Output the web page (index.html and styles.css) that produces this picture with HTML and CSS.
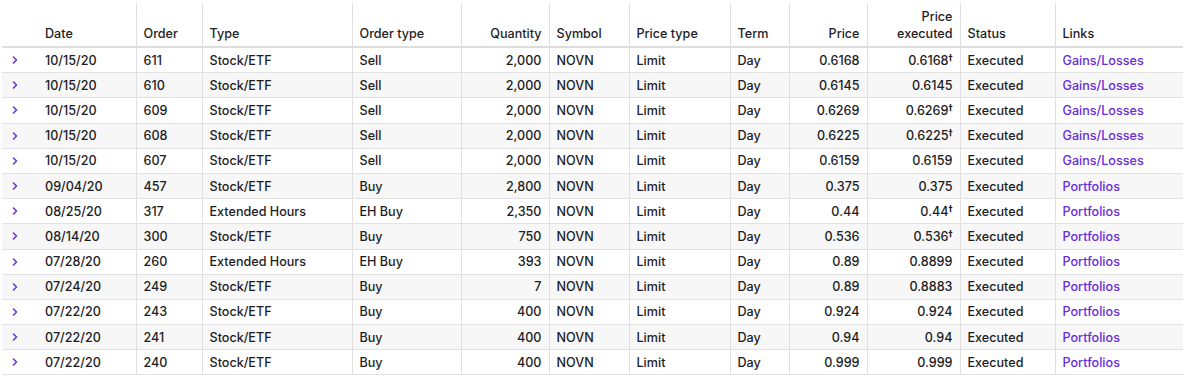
FILE: index.html
```html
<!DOCTYPE html>
<html lang="en">
<head>
<meta charset="utf-8">
<title>Orders</title>
<link rel="stylesheet" href="styles.css">
</head>
<body>
<table class="orders">
  <colgroup>
    <col class="c-arrow"><col class="c-date"><col class="c-order"><col class="c-type"><col class="c-otype"><col class="c-qty"><col class="c-sym"><col class="c-ptype"><col class="c-term"><col class="c-price"><col class="c-pexec"><col class="c-status"><col class="c-links">
  </colgroup>
  <thead>
    <tr>
      <th class="arrow"></th>
      <th>Date</th>
      <th class="bl">Order</th>
      <th class="bl">Type</th>
      <th class="bl">Order type</th>
      <th class="bl num">Quantity</th>
      <th class="bl">Symbol</th>
      <th class="bl">Price type</th>
      <th class="bl">Term</th>
      <th class="bl num">Price</th>
      <th class="bl num">Price<br>executed</th>
      <th class="bl">Status</th>
      <th class="bl">Links</th>
    </tr>
  </thead>
  <tbody>
    <tr><td class="arrow"><svg class="chev" width="6" height="8" viewBox="0 0 6 8"><polyline points="1.5,1 4.5,4 1.5,7"/></svg></td><td>10/15/20</td><td class="bl">611</td><td class="bl">Stock/ETF</td><td class="bl">Sell</td><td class="bl num">2,000</td><td class="bl">NOVN</td><td class="bl">Limit</td><td class="bl">Day</td><td class="bl num">0.6168</td><td class="bl num">0.6168<sup>†</sup></td><td class="bl">Executed</td><td class="bl"><a href="#">Gains/Losses</a></td></tr>
    <tr><td class="arrow"><svg class="chev" width="6" height="8" viewBox="0 0 6 8"><polyline points="1.5,1 4.5,4 1.5,7"/></svg></td><td>10/15/20</td><td class="bl">610</td><td class="bl">Stock/ETF</td><td class="bl">Sell</td><td class="bl num">2,000</td><td class="bl">NOVN</td><td class="bl">Limit</td><td class="bl">Day</td><td class="bl num">0.6145</td><td class="bl num">0.6145</td><td class="bl">Executed</td><td class="bl"><a href="#">Gains/Losses</a></td></tr>
    <tr><td class="arrow"><svg class="chev" width="6" height="8" viewBox="0 0 6 8"><polyline points="1.5,1 4.5,4 1.5,7"/></svg></td><td>10/15/20</td><td class="bl">609</td><td class="bl">Stock/ETF</td><td class="bl">Sell</td><td class="bl num">2,000</td><td class="bl">NOVN</td><td class="bl">Limit</td><td class="bl">Day</td><td class="bl num">0.6269</td><td class="bl num">0.6269<sup>†</sup></td><td class="bl">Executed</td><td class="bl"><a href="#">Gains/Losses</a></td></tr>
    <tr><td class="arrow"><svg class="chev" width="6" height="8" viewBox="0 0 6 8"><polyline points="1.5,1 4.5,4 1.5,7"/></svg></td><td>10/15/20</td><td class="bl">608</td><td class="bl">Stock/ETF</td><td class="bl">Sell</td><td class="bl num">2,000</td><td class="bl">NOVN</td><td class="bl">Limit</td><td class="bl">Day</td><td class="bl num">0.6225</td><td class="bl num">0.6225<sup>†</sup></td><td class="bl">Executed</td><td class="bl"><a href="#">Gains/Losses</a></td></tr>
    <tr><td class="arrow"><svg class="chev" width="6" height="8" viewBox="0 0 6 8"><polyline points="1.5,1 4.5,4 1.5,7"/></svg></td><td>10/15/20</td><td class="bl">607</td><td class="bl">Stock/ETF</td><td class="bl">Sell</td><td class="bl num">2,000</td><td class="bl">NOVN</td><td class="bl">Limit</td><td class="bl">Day</td><td class="bl num">0.6159</td><td class="bl num">0.6159</td><td class="bl">Executed</td><td class="bl"><a href="#">Gains/Losses</a></td></tr>
    <tr><td class="arrow"><svg class="chev" width="6" height="8" viewBox="0 0 6 8"><polyline points="1.5,1 4.5,4 1.5,7"/></svg></td><td>09/04/20</td><td class="bl">457</td><td class="bl">Stock/ETF</td><td class="bl">Buy</td><td class="bl num">2,800</td><td class="bl">NOVN</td><td class="bl">Limit</td><td class="bl">Day</td><td class="bl num">0.375</td><td class="bl num">0.375</td><td class="bl">Executed</td><td class="bl"><a href="#">Portfolios</a></td></tr>
    <tr><td class="arrow"><svg class="chev" width="6" height="8" viewBox="0 0 6 8"><polyline points="1.5,1 4.5,4 1.5,7"/></svg></td><td>08/25/20</td><td class="bl">317</td><td class="bl">Extended Hours</td><td class="bl">EH Buy</td><td class="bl num">2,350</td><td class="bl">NOVN</td><td class="bl">Limit</td><td class="bl">Day</td><td class="bl num">0.44</td><td class="bl num">0.44<sup>†</sup></td><td class="bl">Executed</td><td class="bl"><a href="#">Portfolios</a></td></tr>
    <tr><td class="arrow"><svg class="chev" width="6" height="8" viewBox="0 0 6 8"><polyline points="1.5,1 4.5,4 1.5,7"/></svg></td><td>08/14/20</td><td class="bl">300</td><td class="bl">Stock/ETF</td><td class="bl">Buy</td><td class="bl num">750</td><td class="bl">NOVN</td><td class="bl">Limit</td><td class="bl">Day</td><td class="bl num">0.536</td><td class="bl num">0.536<sup>†</sup></td><td class="bl">Executed</td><td class="bl"><a href="#">Portfolios</a></td></tr>
    <tr><td class="arrow"><svg class="chev" width="6" height="8" viewBox="0 0 6 8"><polyline points="1.5,1 4.5,4 1.5,7"/></svg></td><td>07/28/20</td><td class="bl">260</td><td class="bl">Extended Hours</td><td class="bl">EH Buy</td><td class="bl num">393</td><td class="bl">NOVN</td><td class="bl">Limit</td><td class="bl">Day</td><td class="bl num">0.89</td><td class="bl num">0.8899</td><td class="bl">Executed</td><td class="bl"><a href="#">Portfolios</a></td></tr>
    <tr><td class="arrow"><svg class="chev" width="6" height="8" viewBox="0 0 6 8"><polyline points="1.5,1 4.5,4 1.5,7"/></svg></td><td>07/24/20</td><td class="bl">249</td><td class="bl">Stock/ETF</td><td class="bl">Buy</td><td class="bl num">7</td><td class="bl">NOVN</td><td class="bl">Limit</td><td class="bl">Day</td><td class="bl num">0.89</td><td class="bl num">0.8883</td><td class="bl">Executed</td><td class="bl"><a href="#">Portfolios</a></td></tr>
    <tr><td class="arrow"><svg class="chev" width="6" height="8" viewBox="0 0 6 8"><polyline points="1.5,1 4.5,4 1.5,7"/></svg></td><td>07/22/20</td><td class="bl">243</td><td class="bl">Stock/ETF</td><td class="bl">Buy</td><td class="bl num">400</td><td class="bl">NOVN</td><td class="bl">Limit</td><td class="bl">Day</td><td class="bl num">0.924</td><td class="bl num">0.924</td><td class="bl">Executed</td><td class="bl"><a href="#">Portfolios</a></td></tr>
    <tr><td class="arrow"><svg class="chev" width="6" height="8" viewBox="0 0 6 8"><polyline points="1.5,1 4.5,4 1.5,7"/></svg></td><td>07/22/20</td><td class="bl">241</td><td class="bl">Stock/ETF</td><td class="bl">Buy</td><td class="bl num">400</td><td class="bl">NOVN</td><td class="bl">Limit</td><td class="bl">Day</td><td class="bl num">0.94</td><td class="bl num">0.94</td><td class="bl">Executed</td><td class="bl"><a href="#">Portfolios</a></td></tr>
    <tr><td class="arrow"><svg class="chev" width="6" height="8" viewBox="0 0 6 8"><polyline points="1.5,1 4.5,4 1.5,7"/></svg></td><td>07/22/20</td><td class="bl">240</td><td class="bl">Stock/ETF</td><td class="bl">Buy</td><td class="bl num">400</td><td class="bl">NOVN</td><td class="bl">Limit</td><td class="bl">Day</td><td class="bl num">0.999</td><td class="bl num">0.999</td><td class="bl">Executed</td><td class="bl"><a href="#">Portfolios</a></td></tr>
  </tbody>
</table>
</body>
</html>
```
FILE: styles.css
```css
html, body {
  margin: 0;
  padding: 0;
  background: #ffffff;
}

body {
  padding: 3px 0 0 2px;
  font-family: Inter, "Liberation Sans", Arial, sans-serif;
  font-size: 12.6px;
  font-weight: 500;
  color: #1d1d1f;
}

.orders {
  border-collapse: collapse;
  table-layout: fixed;
  width: 1181px;
}

.c-arrow { width: 36px; }
.c-date { width: 98px; }
.c-order { width: 66px; }
.c-type { width: 150px; }
.c-otype { width: 109px; }
.c-qty { width: 88px; }
.c-sym { width: 80px; }
.c-ptype { width: 101px; }
.c-term { width: 59px; }
.c-price { width: 78px; }
.c-pexec { width: 93px; }
.c-status { width: 95px; }
.c-links { width: 128px; }

.orders th,
.orders td {
  padding: 0 7px;
  text-align: left;
  white-space: nowrap;
}

.orders th {
  height: 39px;
  vertical-align: bottom;
  padding-bottom: 4px;
  line-height: 17px;
  font-weight: 500;
  border-bottom: 2px solid #dddddd;
}

.orders td {
  height: 23.2px;
  padding-top: 1px;
  line-height: 16px;
  vertical-align: middle;
  border-bottom: 1px solid #e2e2e2;
}

.orders .bl {
  border-left: 1px solid #e0e0e0;
}

.orders .num {
  text-align: right;
}

.orders tbody tr:nth-child(even) td {
  background: #f7f7f7;
}

.orders .arrow {
  padding: 0 0 0 10px;
}

.chev {
  display: block;
  fill: none;
  stroke: #6a35d8;
  stroke-width: 1.6;
  stroke-linecap: round;
  stroke-linejoin: round;
}

.orders sup {
  font-family: "DejaVu Sans", sans-serif;
  font-size: 8px;
  font-weight: 700;
  line-height: 0;
  vertical-align: 4px;
}

.orders a {
  color: #6a2bdc;
  text-decoration: none;
}
```
